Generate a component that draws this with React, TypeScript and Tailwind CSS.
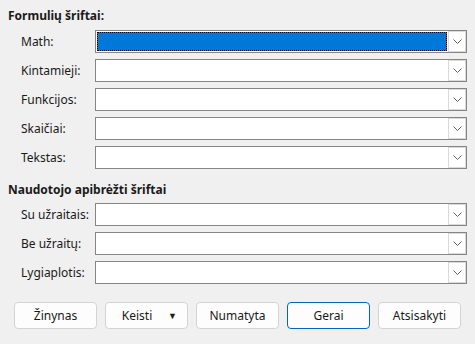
import React from "react";

const fontRows = ["Math:", "Kintamieji:", "Funkcijos:", "Skaičiai:", "Tekstas:"];
const customRows = ["Su užraitais:", "Be užraitų:", "Lygiaplotis:"];

function Chevron() {
  return (
    <svg width="9" height="5" viewBox="0 0 9 5" fill="none">
      <path d="M0.5 0.5 L4.5 4.5 L8.5 0.5" stroke="#606060" strokeWidth="1" />
    </svg>
  );
}

function Combo({ selected }: { selected?: boolean }) {
  return (
    <div className="flex h-[23px] w-[372px] shrink-0 border border-[#858585] bg-white">
      <div className="flex-1 p-px">
        {selected && (
          <div className="h-full w-full border border-dotted border-black bg-[#0078d7]" />
        )}
      </div>
      <div className="flex w-[18px] items-center justify-center border border-[#dadada] bg-white">
        <Chevron />
      </div>
    </div>
  );
}

function Row({ label, selected }: { label: string; selected?: boolean }) {
  return (
    <div className="flex h-[23px] items-center">
      <span className="w-[95px] shrink-0 whitespace-nowrap pl-[21px] text-[#1a1a1a]">
        {label}
      </span>
      <Combo selected={selected} />
    </div>
  );
}

export default function App() {
  return (
    <div
      className="h-[344px] w-[475px] overflow-hidden bg-[#f0f0f0] text-[12px] leading-[16px] text-[#1a1a1a]"
      style={{ fontFamily: '"Segoe UI", "Noto Sans", sans-serif' }}
    >
      <div className="pl-[8px] pt-[8px]">
        <p className="h-[16px] font-bold">Formulių šriftai:</p>
      </div>
      <div className="mt-[6px] flex flex-col gap-[6px]">
        {fontRows.map((r, i) => (
          <Row key={r} label={r} selected={i === 0} />
        ))}
      </div>

      <div className="mt-[13px] pl-[8px]">
        <p className="h-[16px] font-bold">Naudotojo apibrėžti šriftai</p>
      </div>
      <div className="mt-[5px] flex flex-col gap-[6px]">
        {customRows.map((r) => (
          <Row key={r} label={r} />
        ))}
      </div>

      <div className="mt-[18px] flex gap-[8px] pl-[14px]">
        <button className="h-[27px] w-[83px] rounded-[4px] border border-[#d4d4d4] bg-[#fdfdfd]">
          Žinynas
        </button>
        <button className="flex h-[27px] w-[83px] items-center rounded-[4px] border border-[#d4d4d4] bg-[#fdfdfd]">
          <span className="flex-1 text-center">Keisti</span>
          <span className="pr-[10px] text-[9px] leading-none">▼</span>
        </button>
        <button className="h-[27px] w-[83px] rounded-[4px] border border-[#d4d4d4] bg-[#fdfdfd]">
          Numatyta
        </button>
        <button className="h-[27px] w-[83px] rounded-[4px] border border-[#0067c0] bg-[#fdfdfd]">
          Gerai
        </button>
        <button className="h-[27px] w-[83px] rounded-[4px] border border-[#d4d4d4] bg-[#fdfdfd]">
          Atsisakyti
        </button>
      </div>
    </div>
  );
}
